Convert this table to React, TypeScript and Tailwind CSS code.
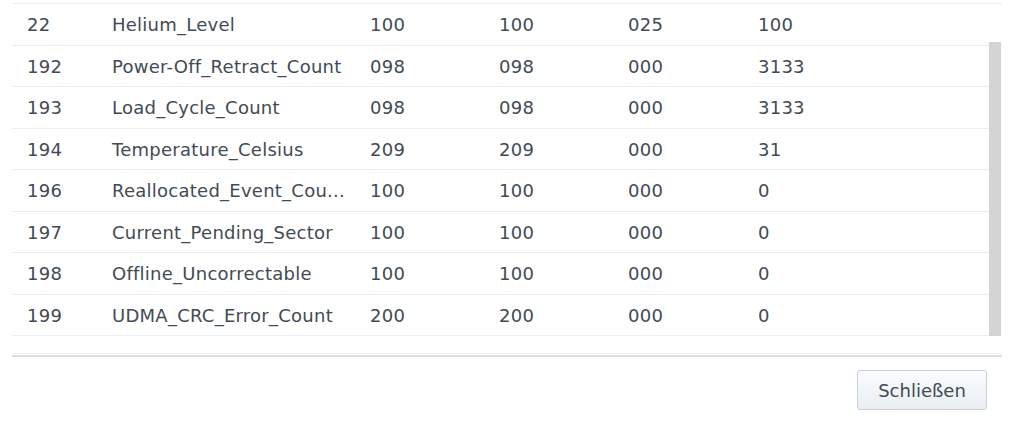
import React from 'react'

type Zeile = { id: string; name: string; wert: string; worst: string; schwelle: string; roh: string }

const zeilen: Zeile[] = [
  { id: '22', name: 'Helium_Level', wert: '100', worst: '100', schwelle: '025', roh: '100' },
  { id: '192', name: 'Power-Off_Retract_Count', wert: '098', worst: '098', schwelle: '000', roh: '3133' },
  { id: '193', name: 'Load_Cycle_Count', wert: '098', worst: '098', schwelle: '000', roh: '3133' },
  { id: '194', name: 'Temperature_Celsius', wert: '209', worst: '209', schwelle: '000', roh: '31' },
  { id: '196', name: 'Reallocated_Event_Cou...', wert: '100', worst: '100', schwelle: '000', roh: '0' },
  { id: '197', name: 'Current_Pending_Sector', wert: '100', worst: '100', schwelle: '000', roh: '0' },
  { id: '198', name: 'Offline_Uncorrectable', wert: '100', worst: '100', schwelle: '000', roh: '0' },
  { id: '199', name: 'UDMA_CRC_Error_Count', wert: '200', worst: '200', schwelle: '000', roh: '0' },
]

function App() {
  return (
    <div
      className="w-[1021px] h-[421px] bg-white text-[#414b55] overflow-hidden"
      style={{ fontFamily: '"DejaVu Sans", Verdana, sans-serif' }}
    >
      <div className="pt-[3px] pl-[12px] pr-[19px]">
        <div className="border-t border-[#eceff2]">
          <div className="flex">
            <div className="flex-1">
              {zeilen.map((z) => (
                <div
                  key={z.id}
                  className="flex items-center h-[41.5px] pt-[1px] border-b border-[#e9edf1] text-[18px] tracking-[0.25px] whitespace-nowrap"
                >
                  <div className="w-[100px] pl-[15px]">{z.id}</div>
                  <div className="w-[258px]">{z.name}</div>
                  <div className="w-[129px]">{z.wert}</div>
                  <div className="w-[129px]">{z.worst}</div>
                  <div className="w-[130px]">{z.schwelle}</div>
                  <div className="flex-1">{z.roh}</div>
                </div>
              ))}
            </div>
            <div className="w-[13px] pt-[38px]">
              <div className="w-[12px] h-[294px] bg-[#d4d4d4]" />
            </div>
          </div>
        </div>
        <div className="mt-[17px] border-t border-[#f0f0f0] pt-[1px]">
          <div className="border-t-2 border-[#dcdcdc]" />
        </div>
      </div>
      <div className="flex justify-end pr-[34px] pt-[13px]">
        <button
          type="button"
          className="w-[130px] h-[40px] rounded-[3px] border border-[#c8d2dc] bg-gradient-to-b from-[#fbfcfd] to-[#e9eef3] text-[18px] text-[#414b55]"
        >
          Schließen
        </button>
      </div>
    </div>
  )
}

export default App
